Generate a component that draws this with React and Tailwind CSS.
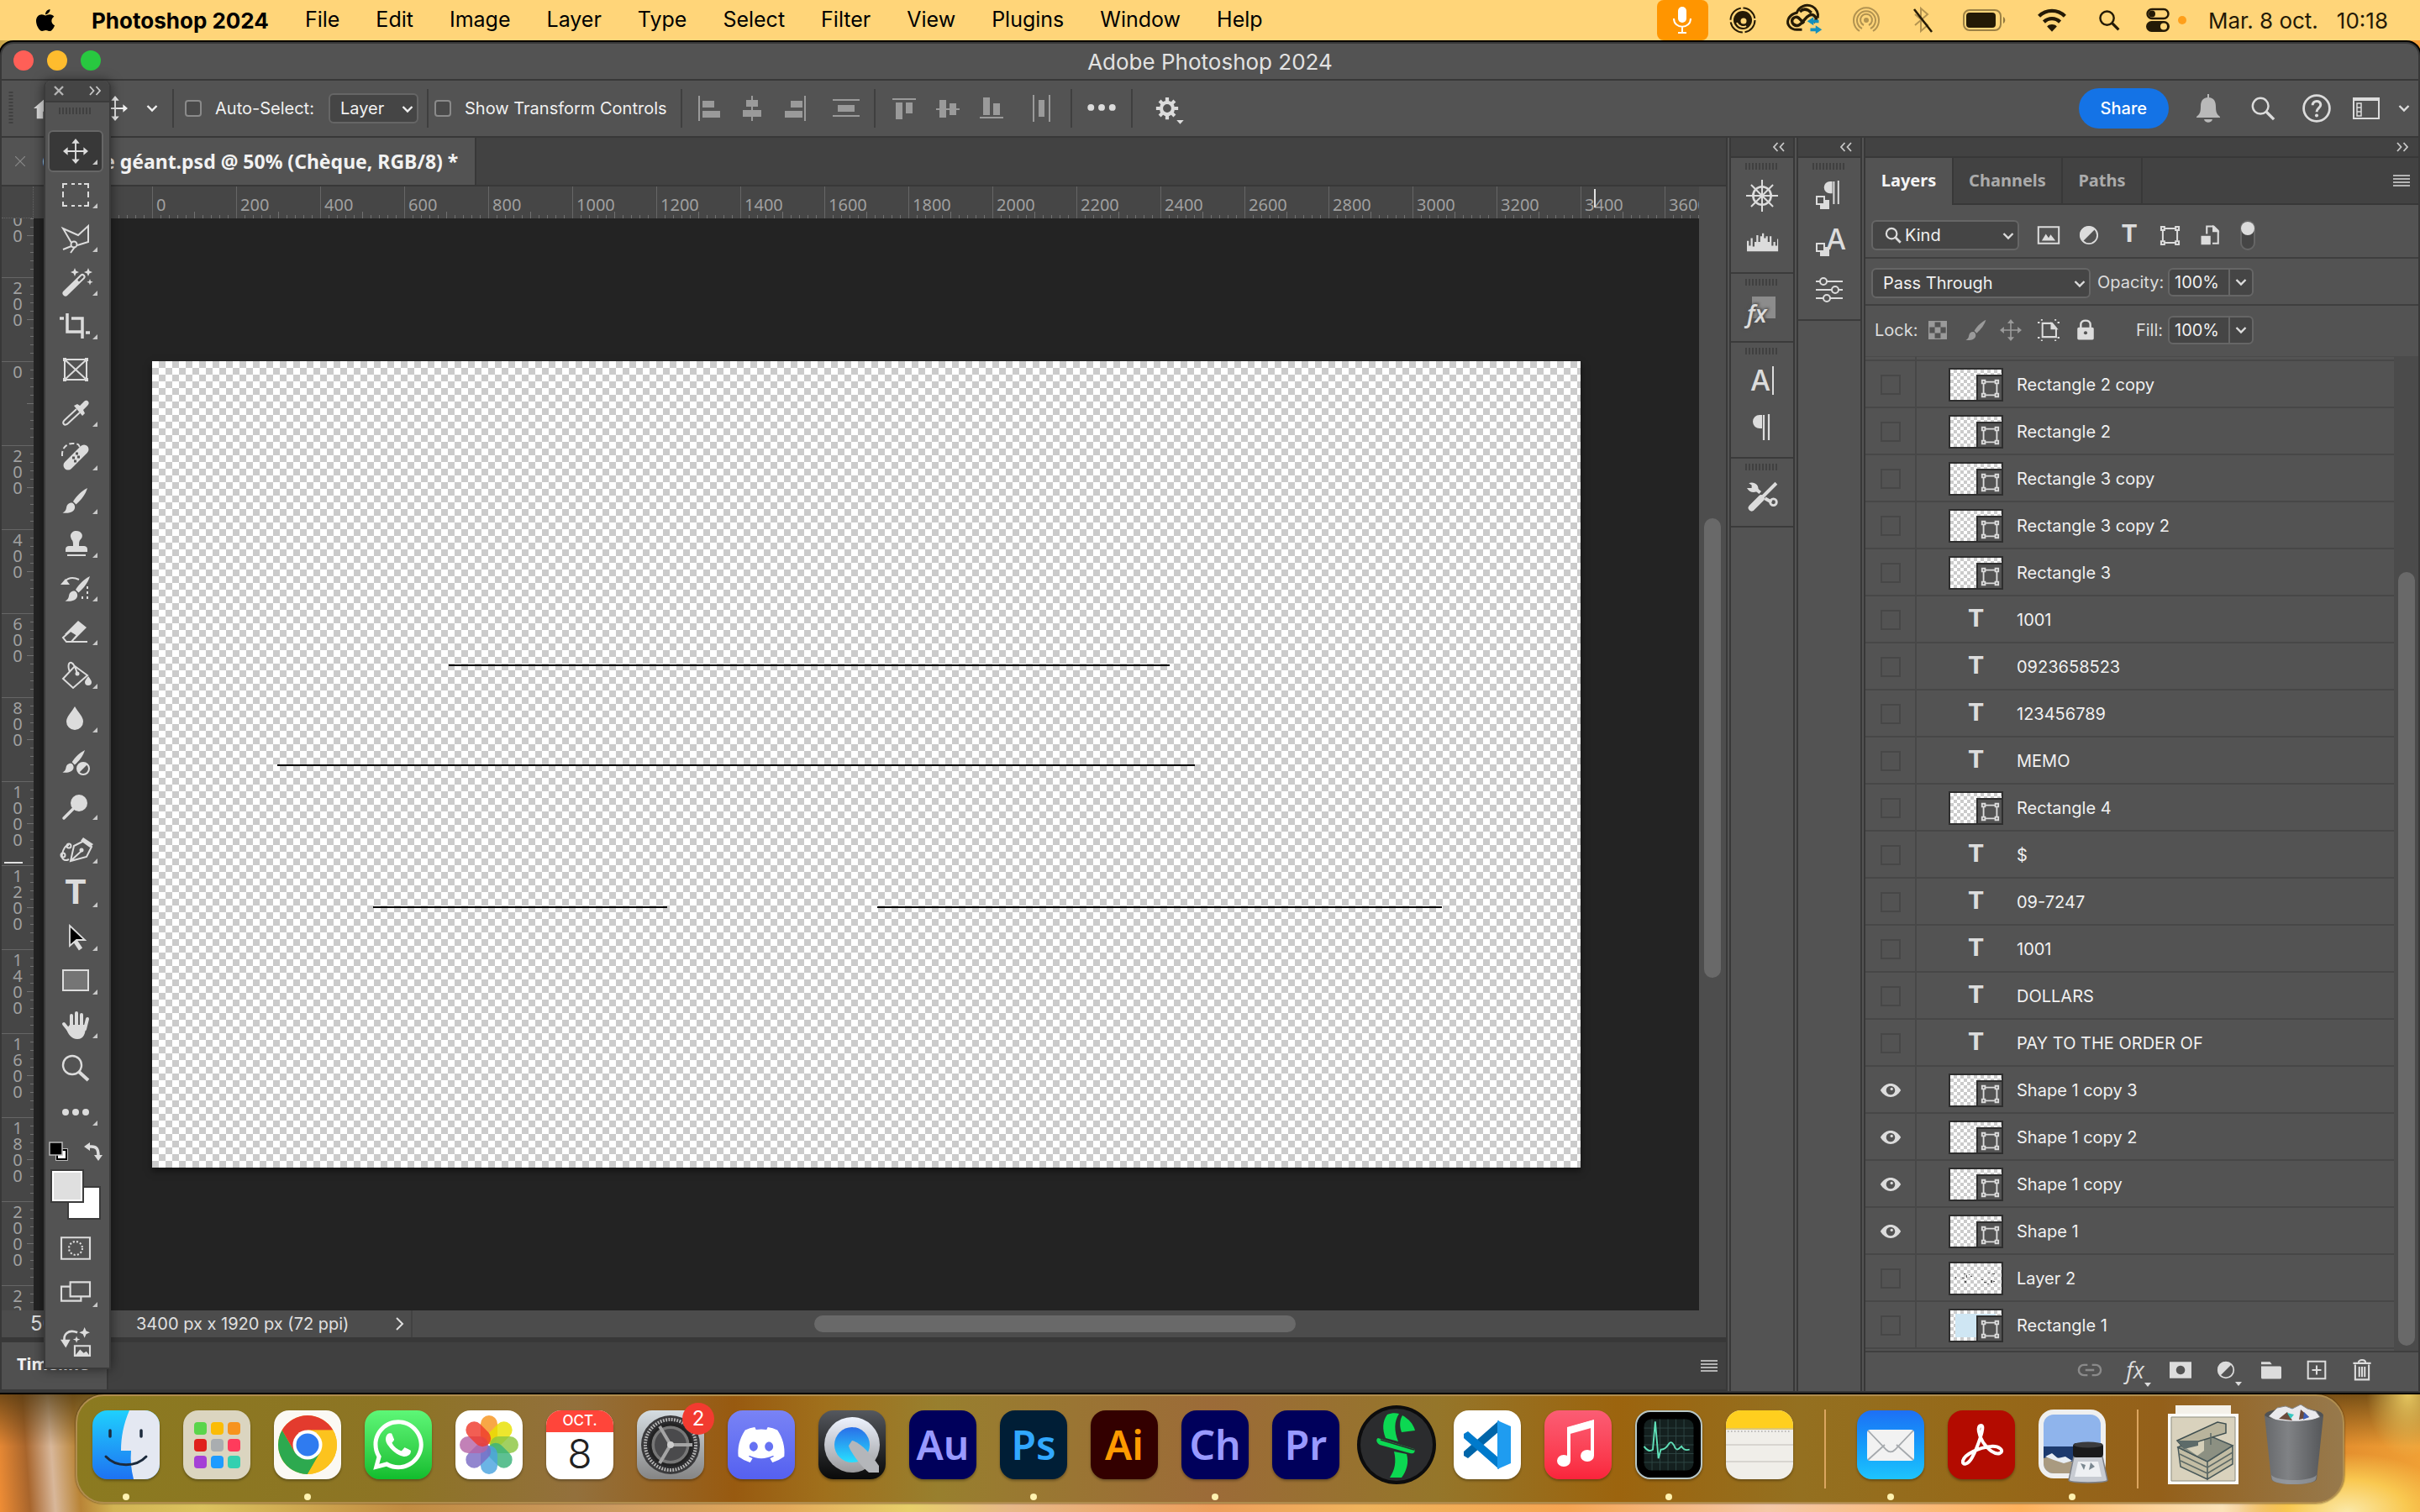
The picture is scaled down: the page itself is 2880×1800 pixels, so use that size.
import { useState } from "react";
import { FaApple, FaDiscord, FaWhatsapp } from "react-icons/fa";

const menus = ["File", "Edit", "Image", "Layer", "Type", "Select", "Filter", "View", "Plugins", "Window", "Help"];

const initialLayers = [
  { name: "Rectangle 2 copy", kind: "shape", visible: false },
  { name: "Rectangle 2", kind: "shape", visible: false },
  { name: "Rectangle 3 copy", kind: "shape", visible: false },
  { name: "Rectangle 3 copy 2", kind: "shape", visible: false },
  { name: "Rectangle 3", kind: "shape", visible: false },
  { name: "1001", kind: "text", visible: false },
  { name: "0923658523", kind: "text", visible: false },
  { name: "123456789", kind: "text", visible: false },
  { name: "MEMO", kind: "text", visible: false },
  { name: "Rectangle 4", kind: "shape", visible: false },
  { name: "$", kind: "text", visible: false },
  { name: "09-7247", kind: "text", visible: false },
  { name: "1001", kind: "text", visible: false },
  { name: "DOLLARS", kind: "text", visible: false },
  { name: "PAY TO THE ORDER OF", kind: "text", visible: false },
  { name: "Shape 1 copy 3", kind: "shape", visible: true },
  { name: "Shape 1 copy 2", kind: "shape", visible: true },
  { name: "Shape 1 copy", kind: "shape", visible: true },
  { name: "Shape 1", kind: "shape", visible: true },
  { name: "Layer 2", kind: "pixel", visible: false },
  { name: "Rectangle 1", kind: "fill", visible: false },
];

const Svg = ({ size = 32, className = "", children }) => (
  <svg
    width={size}
    height={size}
    viewBox="0 0 32 32"
    fill="none"
    stroke="currentColor"
    strokeWidth="2"
    className={`shrink-0 overflow-visible ${className}`}
    aria-hidden="true"
  >
    {children}
  </svg>
);

const Chevron = ({ className = "" }) => (
  <svg width="14" height="10" viewBox="0 0 14 10" fill="none" stroke="currentColor" strokeWidth="2.4" className={`shrink-0 ${className}`} aria-hidden="true">
    <path d="M1.5 2l5.5 5.5L12.500 2" />
  </svg>
);

const DoubleChevron = ({ left }) => (
  <svg width="14" height="12" viewBox="0 0 14 12" fill="none" stroke="#c8c8c8" strokeWidth="1.8" className={left ? "rotate-180" : ""} aria-hidden="true">
    <path d="M1 1l4.500 5L1 11M8.500 1l4.500 5-4.500 5" />
  </svg>
);

const Grip = () => (
  <svg width="40" height="8" viewBox="0 0 40 8" stroke="#404040" strokeWidth="2" aria-hidden="true">
    <path d="M1 0v8M5 0v8M9 0v8M13 0v8M17 0v8M21 0v8M25 0v8M29 0v8M33 0v8M37 0v8" />
  </svg>
);

const Hamburger = () => (
  <svg width="20" height="15" viewBox="0 0 20 15" stroke="#b4b4b4" strokeWidth="2" aria-hidden="true">
    <path d="M0 1h20M0 5h20M0 9h20M0 13h20" />
  </svg>
);

const MoveIcon = ({ size = 30 }) => (
  <Svg size={size}>
    <path d="M16 4v24M4 16h24" />
    <path d="M16 0l5 6H11zM16 32l5-6H11zM0 16l6-5v10zM32 16l-6-5v10z" fill="currentColor" stroke="none" />
  </Svg>
);

const SearchIcon = ({ size = 28, w = 3 }) => (
  <Svg size={size}>
    <circle cx="13" cy="13" r="10" strokeWidth={w} />
    <path d="M20.500 20.500L30 30" strokeWidth={w + 1} />
  </Svg>
);

const TypeIcon = ({ className = "text-[44px]" }) => (
  <span className={`font-['Liberation_Mono',monospace] leading-none font-bold ${className}`}>T</span>
);

const ShapeIcon = ({ size = 24 }) => (
  <Svg size={size}>
    <path d="M8 5h16M8 27h16M5 8v16M27 8v16" strokeWidth="2.600" />
    <path d="M2.500 2.500h5v5h-5zM24.500 2.500h5v5h-5zM2.500 24.500h5v5h-5zM24.500 24.500h5v5h-5z" strokeWidth="2.600" />
  </Svg>
);

const AdjustIcon = ({ size = 24 }) => (
  <Svg size={size}>
    <circle cx="16" cy="16" r="13.500" strokeWidth="2.500" />
    <path d="M25.500 6.500A13.500 13.500 0 1 0 6.500 25.500z" fill="currentColor" stroke="none" />
  </Svg>
);

const BrushShape = () => (
  <g fill="currentColor" stroke="none">
    <path d="M30 1c-6 3-13 9-17 16l3.500 3.500C23 15 28 8 30 1z" />
    <path d="M11.500 18.500c-4 0-6 2.500-6.500 6-.4 3-2 5-4.500 6 6 1 13 0 14.500-5.500.6-2.500-.8-6-3.500-6.500z" />
  </g>
);

const tools = [
  { name: "Move", icon: <MoveIcon />, sub: true },
  {
    name: "Rectangular marquee",
    icon: (
      <Svg>
        <path d="M1 8V3h5M11 3h4M19 3h4M26 3h5v5M31 12v7M31 24v5h-5M23 29h-4M15 29h-4M6 29H1v-5M1 19v-7" />
      </Svg>
    ),
    sub: true,
  },
  {
    name: "Polygonal lasso",
    icon: (
      <Svg>
        <path d="M11 21L1 4l18 8L31 1v19l-13 4" />
        <circle cx="14" cy="23" r="3.500" />
        <path d="M11 25L1 29M15 26l-5 7" />
      </Svg>
    ),
    sub: true,
  },
  {
    name: "Magic wand",
    icon: (
      <Svg>
        <path d="M4 29L24 9.500" strokeWidth="7" strokeLinecap="round" />
        <path d="M20 13.500l4-4" stroke="#535353" strokeWidth="3" strokeLinecap="round" />
        <path d="M15-1l1.400 3.600L20 4l-3.600 1.400L15 9l-1.400-3.600L10 4l3.600-1.400zM31-1l1.400 3.600L36 4l-3.600 1.400L31 9l-1.400-3.600L26 4l3.600-1.400zM33 12l1 2.700 2.700 1-2.700 1-1 2.700-1-2.700-2.700-1 2.700-1z" fill="currentColor" stroke="none" />
      </Svg>
    ),
    sub: true,
  },
  {
    name: "Crop",
    icon: (
      <Svg>
        <path d="M6 1v22h17M-3 7h5M11 7h13v24M28 24h5" strokeWidth="3.500" />
      </Svg>
    ),
    sub: true,
  },
  {
    name: "Frame",
    icon: (
      <Svg>
        <path d="M3 4h26v24H3zM3 4l26 24M29 4L3 28" />
        <path d="M1 2h4v4H1zM27 2h4v4h-4zM1 26h4v4H1zM27 26h4v4h-4z" fill="currentColor" stroke="none" />
      </Svg>
    ),
  },
  {
    name: "Eyedropper",
    icon: (
      <Svg>
        <path d="M17 11L3 24c-2 2-2 4-1 5s3 1 5-1l14-13" />
        <path d="M14 7l4-2 3 2 5-5c2-2 4-1 5 0s1 3-1 5l-5 5 2 4-3 3z" fill="currentColor" stroke="none" />
      </Svg>
    ),
    sub: true,
  },
  {
    name: "Spot healing brush",
    icon: (
      <Svg>
        <path d="M0 15C-1 5 6-1 14 0s5 2 7 4" strokeDasharray="6 3" />
        <path d="M7 26L26 7" strokeWidth="11" strokeLinecap="round" />
        <path d="M12 17h3M17 21h-3M16 12h3M21 16h-3" stroke="#535353" strokeWidth="3" />
      </Svg>
    ),
    sub: true,
  },
  { name: "Brush", icon: <Svg><BrushShape /></Svg>, sub: true },
  {
    name: "Clone stamp",
    icon: (
      <Svg>
        <path d="M10 7a7 6 0 1 1 12 3c-2 2-2 4-2 8h6c2 0 4 1 4 4v3H4v-3c0-3 2-4 4-4h5c0-4 0-6-2-8z" fill="currentColor" stroke="none" />
        <path d="M6 29h22" />
      </Svg>
    ),
    sub: true,
  },
  {
    name: "History brush",
    icon: (
      <Svg>
        <g transform="translate(3 1)"><BrushShape /></g>
        <path d="M3 8c5-5 11-5 17-2" />
        <path d="M-2 12l6-7 5 7z" fill="currentColor" stroke="none" />
        <path d="M30 14v16M24 26v6" strokeDasharray="3 3" />
      </Svg>
    ),
    sub: true,
  },
  {
    name: "Eraser",
    icon: (
      <Svg>
        <path d="M19 3l10 8-14 14-12-6z" fill="currentColor" stroke="none" />
        <path d="M1 23l9-8 8 5-7 8H5zM11 28h19" fill="#535353" />
      </Svg>
    ),
    sub: true,
  },
  {
    name: "Paint bucket",
    icon: (
      <Svg>
        <path d="M1 20L15 5l15 11-17 15zM9 12C6 4 8 0 11 1s5 6 7 13" />
        <circle cx="18" cy="14" r="2.500" fill="currentColor" stroke="none" />
        <path d="M31 17c2 3 4 5 4 7a4 4 0 0 1-8 0c0-2 2-4 4-7z" fill="currentColor" stroke="none" />
      </Svg>
    ),
    sub: true,
  },
  {
    name: "Blur",
    icon: (
      <Svg>
        <path d="M15 1c4 7 10 12 10 18a10 10 0 0 1-20 0C5 13 11 8 15 1z" fill="currentColor" stroke="none" />
      </Svg>
    ),
    sub: true,
  },
  {
    name: "Mixer brush",
    icon: (
      <Svg>
        <g transform="scale(.9)"><BrushShape /></g>
        <circle cx="25" cy="23" r="8" fill="#535353" stroke="#535353" strokeWidth="4" />
        <circle cx="25" cy="23" r="7" />
        <path d="M30 18A7 7 0 1 0 20 28z" fill="currentColor" stroke="none" />
      </Svg>
    ),
  },
  {
    name: "Dodge",
    icon: (
      <Svg>
        <circle cx="20" cy="12" r="10" fill="currentColor" stroke="none" />
        <path d="M14 18L2 30" strokeWidth="3.500" strokeLinecap="round" />
      </Svg>
    ),
    sub: true,
  },
  {
    name: "Pen",
    icon: (
      <Svg>
        <path d="M10 29l4-18 12-6 9 7-6 12zM11 28l12-11" />
        <circle cx="23" cy="16" r="2.500" fill="currentColor" stroke="none" />
        <path d="M25 1l12 8-4 4-11-8z" fill="currentColor" stroke="none" />
        <path d="M8 27c-6 3-9-1-8-6 1-6 4-11 8-11" />
        <circle cx="8" cy="11" r="2.500" />
        <circle cx="1" cy="22" r="2.500" />
      </Svg>
    ),
    sub: true,
  },
  { name: "Horizontal type", icon: <TypeIcon />, sub: true },
  {
    name: "Path selection",
    icon: (
      <Svg>
        <path d="M14 18l8 12" strokeWidth="5" />
        <path d="M9 2l18 17H17l-8 7z" fill="#000" strokeWidth="1.800" />
      </Svg>
    ),
    sub: true,
  },
  {
    name: "Rectangle",
    icon: (
      <Svg>
        <path d="M1 3h30v24H1z" fill="#757575" />
      </Svg>
    ),
    sub: true,
  },
  {
    name: "Hand",
    icon: (
      <Svg>
        <path d="M2 15l8 10M11 5v14M17 2v16M23 4v14M30 9l-3 12" strokeWidth="4" strokeLinecap="round" />
        <path d="M9 16h19c0 10-2 17-10 17-7 0-11-6-13-12z" fill="currentColor" stroke="none" />
      </Svg>
    ),
    sub: true,
  },
  {
    name: "Zoom",
    icon: (
      <Svg>
        <circle cx="12" cy="12" r="11" strokeWidth="2.400" />
        <path d="M20 20l11 10" strokeWidth="4" />
      </Svg>
    ),
  },
  {
    name: "Edit toolbar",
    icon: (
      <Svg>
        <g fill="currentColor" stroke="none">
          <circle cx="4" cy="16" r="4" />
          <circle cx="16" cy="16" r="4" />
          <circle cx="28" cy="16" r="4" />
        </g>
      </Svg>
    ),
    sub: true,
  },
];

function ToolPalette() {
  const [active, setActive] = useState("Move");
  return (
    <aside className="absolute top-11 left-[50px] z-10 flex w-20 flex-col rounded-t-lg border-x-2 border-b-2 border-[#3b3b3b] bg-[#535353] pr-1 pb-1 text-[#dcdcdc] shadow-[0_0_14px_rgba(0,0,0,0.5)]">
      <div className="-mr-1 flex h-[26px] items-center justify-between rounded-t-lg border-b-2 border-[#3b3b3b] bg-[#454545] px-2.5">
        <svg width="12" height="12" viewBox="0 0 12 12" stroke="#b4b4b4" strokeWidth="2.4" aria-hidden="true">
          <path d="M1 1l10 10M11 1L1 11" />
        </svg>
        <DoubleChevron />
      </div>
      <div className="flex h-8 justify-center pt-1.5">
        <Grip />
      </div>
      {tools.map((tool) => (
        <button
          key={tool.name}
          type="button"
          aria-label={tool.name}
          onClick={() => setActive(tool.name)}
          className="relative flex h-[52px] items-center justify-center"
        >
          <span
            className={`flex h-[50px] w-[66px] items-center justify-center rounded-md border-2 ${
              active === tool.name ? "border-[#666] bg-[#383838]" : "border-transparent"
            }`}
          >
            {tool.icon}
          </span>
          {tool.sub && (
            <svg width="6" height="6" viewBox="0 0 6 6" className="absolute right-2.5 bottom-2.5" aria-hidden="true">
              <path d="M6 0v6H0z" fill="#c8c8c8" />
            </svg>
          )}
        </button>
      ))}
      <div className="flex h-[42px] items-center justify-between px-1">
        <svg width="24" height="24" viewBox="0 0 24 24" aria-hidden="true">
          <path d="M8.500 8.500h14v14h-14z" fill="#fff" stroke="#bbb" />
          <path d="M10 10h11v11H10z" fill="#fff" stroke="#000" strokeWidth="2" />
          <path d="M1 1h15v15H1z" fill="#000" stroke="#bbb" strokeWidth="1.500" />
        </svg>
        <svg width="22" height="22" viewBox="0 0 22 22" aria-hidden="true">
          <path d="M5 5h4c6 0 8 3 8 11" fill="none" stroke="#dcdcdc" strokeWidth="3.500" />
          <path d="M0 5l7-5v10zM12 15h10l-5 7z" fill="#dcdcdc" />
        </svg>
      </div>
      <div className="relative mx-auto h-[60px] w-[60px]">
        <div className="absolute right-0 bottom-0 h-10 w-10 border-2 border-[#3b3b3b] bg-white" />
        <div className="absolute top-0 left-0 h-10 w-10 border-2 border-[#3b3b3b] bg-[#dfdfdf] ring-2 ring-white ring-inset" />
      </div>
      <button type="button" aria-label="Quick mask" className="mt-2 flex h-[52px] items-center justify-center">
        <Svg size={34}>
          <path d="M0 4h32v24H0z" />
          <circle cx="16" cy="16" r="7.500" strokeDasharray="2 2" strokeWidth="2" />
        </Svg>
      </button>
      <button type="button" aria-label="Screen mode" className="relative flex h-[52px] items-center justify-center">
        <Svg size={34}>
          <path d="M0 10h22v16H0z" />
          <path d="M10 5h22v16H10z" fill="#535353" />
        </Svg>
        <svg width="6" height="6" viewBox="0 0 6 6" className="absolute right-2.5 bottom-2" aria-hidden="true">
          <path d="M6 0v6H0z" fill="#c8c8c8" />
        </svg>
      </button>
      <button type="button" aria-label="Generate image" className="mt-2 flex h-[52px] items-center justify-center">
        <Svg size={34}>
          <path d="M18 5C8 1 1 7 4 16" strokeWidth="2.500" />
          <path d="M-1 13l6 9 5-9z" fill="currentColor" stroke="none" />
          <path d="M15 20h17v11H15z" />
          <path d="M16 30l5-6 4 4 3-2 3 4zM26-1l1.800 4.200L32 5l-4.200 1.800L26 11l-1.800-4.200L20 5l4.200-1.800zM17 9l1 2.800 3 1-3 1-1 2.800-1-2.800-3-1 3-1z" fill="currentColor" stroke="none" />
        </Svg>
      </button>
    </aside>
  );
}

function MenuBar() {
  return (
    <header className="flex h-12 shrink-0 items-center bg-[#ffd579] pl-[39px] text-[25px] text-black">
      <FaApple size={30} className="shrink-0" />
      <nav className="ml-10 flex items-center gap-[43px] whitespace-nowrap">
        <button type="button" className="text-[26px] font-bold">Photoshop 2024</button>
        {menus.map((m) => (
          <button key={m} type="button">{m}</button>
        ))}
      </nav>
      <div className="ml-auto flex items-center pr-[38px] text-[#241a06]">
        <span className="flex h-12 w-[61px] items-center justify-center rounded-lg bg-[#ff9500] text-white">
          <Svg size={32}>
            <rect x="11" y="0" width="10" height="19" rx="5" fill="currentColor" stroke="none" />
            <path d="M6 14c0 13 20 13 20 0M16 24v6M11 31h10" />
          </Svg>
        </span>
        <span className="ml-[25px] flex w-8 justify-center">
          <Svg>
            <circle cx="16" cy="16" r="14.500" strokeDasharray="20 2.800" />
            <circle cx="16" cy="16" r="11" fill="currentColor" stroke="none" />
            <circle cx="17" cy="17" r="3.500" fill="#ffd579" stroke="none" />
            <path d="M9 19c2 5 8 6 11 4" stroke="#ffd579" />
          </Svg>
        </span>
        <span className="ml-[35px] flex w-11 justify-center">
          <Svg size={40}>
            <path d="M14 25H9C3 25-1 20 1 15s8-6 8-6c2-6 9-9 15-6 4 2 6 7 5 11" strokeWidth="2.400" />
            <path d="M16 19l-5-5c-4-3-9 2-5 6 4 3 7 0 10-4s7-7 10-4 1 5-1 6M12 8c4-4 8-2 11 1" strokeWidth="2.800" />
            <path d="M19 17l6-4v2.500h5v3h-5V21zM33 25l-6-4v2.500h-5v3h5V29z" fill="#1590bd" stroke="none" />
          </Svg>
        </span>
        <span className="ml-9 flex w-8 justify-center opacity-35">
          <Svg>
            <circle cx="16" cy="16" r="3" fill="currentColor" stroke="none" />
            <path d="M13 22a7 7 0 1 1 6 0M11 26a11 11 0 1 1 10 0M8 29a15 15 0 1 1 16 0" />
          </Svg>
        </span>
        <span className="ml-[34px] flex w-8 justify-center">
          <Svg>
            <path d="M8 9l15 13-8 7V2l8 7L8 22" opacity=".35" />
            <path d="M7 3l21 27" strokeWidth="2.500" />
          </Svg>
        </span>
        <svg width="52" height="26" viewBox="0 0 52 26" className="ml-[33px]" aria-hidden="true">
          <rect x="1" y="1" width="44" height="24" rx="7" fill="none" stroke="#241a06" strokeOpacity=".45" strokeWidth="2" />
          <rect x="4" y="4" width="35" height="18" rx="4" fill="#241a06" />
          <path d="M48 9c3 2 3 6 0 8z" fill="#241a06" fillOpacity=".5" />
        </svg>
        <span className="ml-9 flex w-9 justify-center">
          <Svg size={34}>
            <path d="M1.500 11.500c8-8 21-8 29 0M7 18c5-5 13-5 18 0" strokeWidth="4" />
            <path d="M16 29l-5.500-6c3-3 8-3 11 0z" fill="currentColor" stroke="none" />
          </Svg>
        </span>
        <span className="ml-[34px] flex w-8 justify-center"><SearchIcon size={26} /></span>
        <svg width="28" height="30" viewBox="0 0 28 30" className="ml-7" aria-hidden="true">
          <rect x="1.500" y="2" width="25" height="11" rx="5.500" fill="none" stroke="#241a06" strokeWidth="2.400" />
          <circle cx="7" cy="7.500" r="4" fill="#241a06" />
          <rect x="0" y="16" width="28" height="13" rx="6.500" fill="#241a06" />
          <circle cx="21" cy="22.500" r="4" fill="#ffd579" />
        </svg>
        <span className="ml-2.5 h-2.5 w-2.5 rounded-full bg-[#ff9f1a]" />
        <span className="ml-[26px] flex gap-[22px] text-[26px] whitespace-nowrap">
          <span>Mar. 8 oct.</span>
          <span>10:18</span>
        </span>
      </div>
    </header>
  );
}

const Divider = ({ className = "" }) => <div className={`h-[46px] w-0.5 shrink-0 bg-[#3f3f3f] ${className}`} />;

const Check = ({ id, label, className = "" }) => (
  <div className={`flex shrink-0 items-center gap-4 ${className}`}>
    <input id={id} type="checkbox" className="h-5 w-5 appearance-none rounded border-2 border-[#8a8a8a] bg-[#4a4a4a] checked:bg-[#1473e6]" />
    <label htmlFor={id} className="whitespace-nowrap">{label}</label>
  </div>
);

const Select = ({ label, value, className = "", pad = "pl-3", children }) => (
  <div className={`relative h-9 shrink-0 ${className}`}>
    {children}
    <select aria-label={label} className={`h-full w-full appearance-none rounded-md border-2 border-[#666] bg-[#454545] text-[#f0f0f0] ${pad}`}>
      <option>{value}</option>
    </select>
    <Chevron className="pointer-events-none absolute top-3.5 right-1.5" />
  </div>
);

const AlignSlot = ({ label, className = "w-[51px]", children }) => (
  <button type="button" aria-label={label} className={`flex shrink-0 justify-center text-[#9a9a9a] ${className}`}>
    <Svg size={32}>{children}</Svg>
  </button>
);

function OptionsBar() {
  return (
    <div className="flex h-[68px] shrink-0 items-center border-b-2 border-[#383838] pl-2 text-[20px] text-[#f0f0f0]">
      <svg width="6" height="40" viewBox="0 0 6 40" stroke="#404040" strokeWidth="5" className="shrink-0" aria-hidden="true">
        <path d="M3 0v40" strokeDasharray="2 2" />
      </svg>
      <button type="button" aria-label="Home" className="ml-6 w-8 shrink-0 text-[#dcdcdc]">
        <Svg size={30}>
          <path d="M16 2L0 16h4v13h8v-9h8v9h8V16h4z" fill="currentColor" stroke="none" />
        </Svg>
      </button>
      <span className="ml-[50px] shrink-0"><MoveIcon size={30} /></span>
      <Chevron className="ml-[22px]" />
      <Divider className="ml-[17px]" />
      <Check id="auto-select" label="Auto-Select:" className="ml-[13px] w-[171px]" />
      <Select label="Auto-select target" value="Layer" className="w-[107px]" />
      <Divider className="ml-2.5" />
      <Check id="transform-controls" label="Show Transform Controls" className="ml-[7px] w-[293px]" />
      <Divider />
      <AlignSlot label="Align left edges" className="ml-1.5 w-[51px]">
        <path d="M4 1v30" />
        <path d="M8 7h14v8H8zM8 19h21v8H8z" fill="currentColor" stroke="none" />
      </AlignSlot>
      <AlignSlot label="Align horizontal centers">
        <path d="M16 1v30" />
        <path d="M9 6h14v8H9zM5 18h22v8H5z" fill="currentColor" stroke="none" />
      </AlignSlot>
      <AlignSlot label="Align right edges">
        <path d="M28 1v30" />
        <path d="M11 7h14v8H11zM4 19h21v8H4z" fill="currentColor" stroke="none" />
      </AlignSlot>
      <AlignSlot label="Distribute vertically" className="ml-2.5 w-[51px]">
        <path d="M0 6h32M0 25h32" />
        <path d="M6 12h20v8H6z" fill="currentColor" stroke="none" />
      </AlignSlot>
      <Divider className="ml-2" />
      <AlignSlot label="Align top edges" className="ml-2 w-[52px]">
        <path d="M2 5h28" />
        <path d="M6 9h8v20H6zM18 9h8v13h-8z" fill="currentColor" stroke="none" />
      </AlignSlot>
      <AlignSlot label="Align vertical centers" className="w-[52px]">
        <path d="M2 17h28" />
        <path d="M6 6h8v21H6zM18 10h8v14h-8z" fill="currentColor" stroke="none" />
      </AlignSlot>
      <AlignSlot label="Align bottom edges" className="w-[52px]">
        <path d="M2 27h28" />
        <path d="M6 3h8v21H6zM18 10h8v14h-8z" fill="currentColor" stroke="none" />
      </AlignSlot>
      <AlignSlot label="Distribute horizontally" className="ml-2 w-[52px]">
        <path d="M6 0v32M25 0v32" />
        <path d="M12 6h7v20h-7z" fill="currentColor" stroke="none" />
      </AlignSlot>
      <Divider className="ml-2" />
      <button type="button" aria-label="More options" className="flex w-[70px] shrink-0 justify-center text-[#dcdcdc]">
        <Svg size={34}>
          <g fill="currentColor" stroke="none">
            <circle cx="4" cy="15" r="3.700" />
            <circle cx="16" cy="15" r="3.700" />
            <circle cx="28" cy="15" r="3.700" />
          </g>
        </Svg>
      </button>
      <Divider />
      <button type="button" aria-label="Tool settings" className="ml-[26px] shrink-0 text-[#dcdcdc]">
        <Svg size={30}>
          <circle cx="16" cy="16" r="7.500" strokeWidth="4.500" />
          <path d="M16 2v5M16 25v5M2 16h5M25 16h5M6.500 6.500l3.500 3.500M22 22l3.500 3.500M25.500 6.500L22 10M10 22l-3.500 3.500" strokeWidth="4.500" />
          <path d="M28 31h9l-4.500 5z" fill="currentColor" stroke="none" />
        </Svg>
      </button>
      <div className="ml-auto flex items-center pr-2.5 text-[#dcdcdc]">
        <button type="button" className="h-12 rounded-full bg-[#1473e6] px-[26px] text-[20px] font-medium text-white">Share</button>
        <button type="button" aria-label="Notifications" className="ml-[31px] text-[#b9b9b9]">
          <Svg>
            <path d="M16-1v5" />
            <path d="M16 3c7 0 9 5 9 11 0 6 1 9 5 12v1H2v-1c4-3 5-6 5-12 0-6 2-11 9-11zM11 29h10c-1 5-9 5-10 0z" fill="currentColor" stroke="none" />
          </Svg>
        </button>
        <button type="button" aria-label="Search" className="ml-[34px]"><SearchIcon size={30} w={2.6} /></button>
        <button type="button" aria-label="Help" className="ml-8">
          <Svg size={34}>
            <circle cx="16" cy="16" r="14.500" strokeWidth="2.600" />
            <path d="M11.500 12.500c0-6 9-6 9-.5 0 3.500-4.500 4-4.500 8" strokeWidth="2.800" />
            <circle cx="16" cy="24" r="1.900" fill="currentColor" stroke="none" />
          </Svg>
        </button>
        <button type="button" aria-label="Workspace" className="ml-[26px] flex items-center gap-[22px]">
          <Svg>
            <path d="M1 5h30v23H1z" />
            <path d="M0 3h32v4H0z" fill="currentColor" stroke="none" />
            <path d="M5 10h5v15H5zM5 15h5M5 20h5" strokeWidth="1.500" />
          </Svg>
          <Chevron />
        </button>
      </div>
    </div>
  );
}

const hMarks = [-200, 0, 200, 400, 600, 800, 1000, 1200, 1400, 1600, 1800, 2000, 2200, 2400, 2600, 2800, 3000, 3200, 3400, 3600];
const vMarks = [400, 200, 0, 200, 400, 600, 800, 1000, 1200, 1400, 1600, 1800, 2000, 2200];

const HorizontalRuler = () => (
  <div className="relative flex h-[38px] shrink-0 overflow-hidden bg-[#464646] font-['Noto_Sans',sans-serif] text-[20px] text-[#a0a0a0]">
    <div className="w-[38px] shrink-0 border-r border-b border-dotted border-[#666]" />
    <div className="w-[41px] shrink-0" />
    {hMarks.map((m) => (
      <div key={m} className="relative w-[100px] shrink-0 border-l border-[#666] pt-2.5 pl-1 leading-6">
        {m}
        <svg width="100" height="8" viewBox="0 0 100 8" stroke="#707070" className="absolute bottom-0 left-0" aria-hidden="true">
          <path d="M9.500 4v4M19.500 4v4M29.500 4v4M39.500 4v4M49.500 0v8M59.500 4v4M69.500 4v4M79.500 4v4M89.500 4v4" />
        </svg>
      </div>
    ))}
    <div className="absolute top-[3px] left-[1895px] h-[22px] w-0.5 bg-[#e0e0e0]" />
  </div>
);

const VerticalRuler = () => (
  <div className="relative w-[38px] shrink-0 overflow-hidden bg-[#464646] font-['Noto_Sans',sans-serif] text-[20px] text-[#a0a0a0]">
    <div className="-mt-[30px]">
      {vMarks.map((m, i) => (
        <div key={i} className="relative flex h-[100px] flex-col items-center border-t border-[#666] pt-0.5">
          {String(m).split("").map((d, j) => (
            <span key={j} className="h-[19px] leading-[19px]">{d}</span>
          ))}
          <svg width="8" height="100" viewBox="0 0 8 100" stroke="#707070" className="absolute top-0 right-0" aria-hidden="true">
            <path d="M4 9.500h4M4 19.500h4M4 29.500h4M4 39.500h4M0 49.500h8M4 59.500h4M4 69.500h4M4 79.500h4M4 89.500h4" />
          </svg>
        </div>
      ))}
    </div>
    <div className="absolute top-[766px] left-[3px] h-0.5 w-[22px] bg-[#e0e0e0]" />
  </div>
);

function Document() {
  return (
    <section className="flex min-w-0 flex-1 flex-col border-r-2 border-[#383838]">
      <div className="flex h-[58px] shrink-0 border-b-2 border-[#383838] bg-[#424242]">
        <div className="flex items-center border-r-2 border-[#383838] bg-[#535353] pr-5 pl-4 font-['Noto_Sans',sans-serif] text-[23px] font-bold whitespace-nowrap text-[#f2f2f2]">
          <svg width="12" height="12" viewBox="0 0 12 12" stroke="#8a8a8a" strokeWidth="1.2" className="mr-5" aria-hidden="true">
            <path d="M0 0l12 12M12 0L0 12" />
          </svg>
          Chèque géant.psd @ 50% (Chèque, RGB/8) *
        </div>
      </div>
      <div className="flex min-h-0 flex-1">
        <div className="flex min-w-0 flex-1 flex-col">
          <HorizontalRuler />
          <div className="flex min-h-0 flex-1">
            <VerticalRuler />
            <div className="min-w-0 flex-1 overflow-hidden bg-[#232323] pt-[170px] pl-[141px]">
              <div className="relative h-[960px] w-[1700px] bg-[repeating-conic-gradient(#cbcbcb_0_25%,#ffffff_0_50%)] bg-[length:16px_16px] shadow-[0_4px_8px_rgba(0,0,0,0.5)]">
                <div className="absolute top-[361px] left-[353px] h-0.5 w-[858px] bg-black" />
                <div className="absolute top-[480px] left-[149px] h-0.5 w-[1092px] bg-black" />
                <div className="absolute top-[649px] left-[263px] h-0.5 w-[350px] bg-black" />
                <div className="absolute top-[649px] left-[863px] h-0.5 w-[672px] bg-black" />
              </div>
            </div>
          </div>
        </div>
        <div className="w-8 shrink-0 bg-[#4d4d4d] px-1.5 pt-[395px]">
          <div className="h-[547px] rounded-full bg-[#696969]" />
        </div>
      </div>
      <div className="flex h-8 shrink-0 items-center bg-[#4c4c4c] text-[20px] text-[#e0e0e0]">
        <span className="w-40 shrink-0 pl-[34px] text-[24px]">50%</span>
        <span className="w-[309px] shrink-0 whitespace-nowrap">3400 px x 1920 px (72 ppi)</span>
        <svg width="10" height="16" viewBox="0 0 10 16" fill="none" stroke="currentColor" strokeWidth="2" aria-hidden="true">
          <path d="M1 1l7 7-7 7" />
        </svg>
        <div className="ml-2 h-8 w-0.5 shrink-0 bg-[#424242]" />
        <div className="ml-[478px] h-5 w-[573px] rounded-full bg-[#696969]" />
      </div>
      <div className="flex h-16 shrink-0 items-center justify-between border-t-[6px] border-b-2 border-[#383838] bg-[#404040] pr-2.5">
        <h2 className="flex h-full w-[127px] items-center border-r-2 border-[#383838] bg-[#505050] pb-1 pl-[18px] font-['Noto_Sans',sans-serif] text-[20px] font-bold text-[#f2f2f2]">Timeline</h2>
        <Hamburger />
      </div>
    </section>
  );
}

const IconGroup = ({ items }) => (
  <div className="flex flex-col items-center border-b-2 border-[#3b3b3b] pt-1.5 pb-[7px]">
    <Grip />
    <div className="mt-[3px] flex w-full flex-col">
      {items.map((it) => (
        <button key={it.name} type="button" aria-label={it.name} className="flex h-14 items-center justify-center">
          {it.icon}
        </button>
      ))}
    </div>
  </div>
);

const Overlap = () => (
  <>
    <path d="M5 21h11v11H5z" fill="currentColor" stroke="none" />
    <path d="M1 17h9v9H1z" fill="#535353" />
  </>
);

const Pilcrow = ({ x = 0, y = 0, s = 1 }) => (
  <g transform={`translate(${x} ${y}) scale(${s})`}>
    <path d="M22 1H11a8 8 0 0 0 0 16h3V1z" fill="currentColor" stroke="none" />
    <path d="M16 1v30M22 0v31" strokeWidth="2.200" />
  </g>
);

const dockOne = [
  [
    {
      name: "Navigator",
      icon: (
        <Svg size={38}>
          <circle cx="16" cy="16" r="9" strokeWidth="2.200" />
          <path d="M16 0v32M0 16h32M5 5l22 22M27 5L5 27" strokeWidth="1.700" />
        </Svg>
      ),
    },
    {
      name: "Histogram",
      icon: (
        <Svg size={36}>
          <path d="M0 25V14h2v5h2v-8h2v9h2v-5h2V8h2v7h2v-6h2V6h2v5h2V9h2v6h2V9h2v10h2v-4h2v4h2v-7h1v13z" fill="currentColor" stroke="none" />
        </Svg>
      ),
    },
  ],
  [
    {
      name: "Styles",
      icon: (
        <span className="relative flex h-9 w-9 items-end">
          <span className="absolute top-0 right-0.5 h-[26px] w-7 bg-[#8c8c8c]" />
          <span className="relative font-['Open_Sans',sans-serif] text-[28px] leading-8 font-semibold italic [text-shadow:0_0_3px_#535353,0_0_4px_#535353,2px_-1px_3px_#535353]">fx</span>
        </span>
      ),
    },
  ],
  [
    {
      name: "Character",
      icon: (
        <span className="flex items-center border-r-2 border-[#dcdcdc] pr-0.5 text-[34px] leading-[34px] font-medium">A</span>
      ),
    },
    { name: "Paragraph", icon: <Svg><Pilcrow x={2} /></Svg> },
  ],
  [
    {
      name: "Tool presets",
      icon: (
        <Svg size={36}>
          <path d="M31 2L17 16" strokeWidth="3.500" />
          <path d="M15 18L5 28" strokeWidth="7" strokeLinecap="round" />
          <path d="M8 7l6 5M19 18l7 4" strokeWidth="3.500" />
          <path d="M2 2c5-2 11 1 10 8-5 3-10 1-12-3h5V4z" fill="currentColor" stroke="none" />
          <circle cx="28" cy="22" r="3.400" strokeWidth="2.500" />
        </Svg>
      ),
    },
  ],
];

const dockTwo = [
  [
    {
      name: "Paragraph styles",
      icon: <Svg><Pilcrow x={7} y={-2} s={0.9} /><Overlap /></Svg>,
    },
    {
      name: "Character styles",
      icon: (
        <span className="relative">
          <Svg><Overlap /></Svg>
          <span className="absolute -top-2 -right-1 text-[34px] leading-10 font-medium">A</span>
        </span>
      ),
    },
    {
      name: "Properties",
      icon: (
        <Svg>
          <path d="M0 6h5M13 6h19M0 16h19M27 16h5M0 26h9M17 26h15" />
          <circle cx="9" cy="6" r="4" />
          <circle cx="23" cy="16" r="4" />
          <circle cx="13" cy="26" r="4" />
        </Svg>
      ),
    },
  ],
];

const IconColumn = ({ groups }) => (
  <div className="flex w-[78px] shrink-0 flex-col border-x-2 border-[#383838] bg-[#535353] text-[#dcdcdc]">
    <div className="flex h-6 items-center justify-end border-b-2 border-[#383838] bg-[#424242] pr-2.5">
      <DoubleChevron left />
    </div>
    {groups.map((g, i) => (
      <IconGroup key={i} items={g} />
    ))}
  </div>
);

const PercentField = ({ id, label }) => (
  <div className="flex items-center gap-1.5">
    <label htmlFor={id} className="w-[78px] text-right">{label}</label>
    <div className="flex h-[34px] w-[102px] rounded-md border-2 border-[#666] bg-[#454545]">
      <input id={id} type="text" defaultValue="100%" className="w-[72px] border-r-2 border-[#666] bg-transparent pl-1.5 text-[#f0f0f0]" />
      <button type="button" aria-label={`${label} slider`} className="flex flex-1 items-center justify-center">
        <Chevron />
      </button>
    </div>
  </div>
);

const Thumb = ({ kind }) => {
  if (kind === "text") {
    return (
      <span className="flex w-[65px] justify-center">
        <TypeIcon className="text-[32px]" />
      </span>
    );
  }
  return (
    <span className="relative block h-10 w-[65px] border-2 border-[#2e2e2e] bg-[repeating-conic-gradient(#cbcbcb_0_25%,#ffffff_0_50%)] bg-[length:8px_8px]">
      {kind === "fill" && <span className="absolute top-1 left-1.5 h-7 w-12 bg-[#cfe6f3]" />}
      {kind === "pixel" && (
        <svg width="61" height="36" viewBox="0 0 61 36" fill="#555" className="absolute inset-0" aria-hidden="true">
          <path d="M16 12h2v1h-2zM19 14h1v3h-1zM14 17h3v1h-3zM22 13h1v1h-1zM24 15h2v1h-2zM17 21h2v2h-2zM6 16h1v2H6zM45 11h2v1h-2zM50 12h3v1h-3zM37 19h2v1h-2zM40 22h3v1h-3zM48 20h2v3h-2zM44 24h2v1h-2zM51 21h2v1h-2z" />
        </svg>
      )}
      {kind !== "pixel" && (
        <span className="absolute -right-0.5 -bottom-0.5 flex h-8 w-8 items-center justify-center border-2 border-[#2e2e2e] bg-[#535353]">
          <ShapeIcon size={23} />
        </span>
      )}
    </span>
  );
};

function LayerRow({ layer, onToggle }) {
  return (
    <li className="flex h-14 items-center border-b-2 border-[#474747]">
      <label className="relative flex h-full w-[61px] shrink-0 items-center justify-center border-r-2 border-[#474747] pt-0.5">
        <input
          type="checkbox"
          aria-label={`Show ${layer.name}`}
          checked={layer.visible}
          onChange={onToggle}
          className="h-6 w-6 appearance-none border-2 border-[#474747] checked:border-transparent"
        />
        {layer.visible && (
          <Svg size={26} className="absolute">
            <path d="M1 16C9 3 23 3 31 16 23 29 9 29 1 16z" fill="currentColor" stroke="none" />
            <circle cx="16" cy="16" r="6.500" fill="#535353" stroke="none" />
            <circle cx="17.500" cy="14" r="2" fill="currentColor" stroke="none" />
          </Svg>
        )}
      </label>
      <div className="flex items-center gap-4 pt-0.5 pl-[38px]">
        <Thumb kind={layer.kind} />
        <span className="whitespace-nowrap text-[#f0f0f0]">{layer.name}</span>
      </div>
    </li>
  );
}

const FilterButton = ({ label, children }) => (
  <button type="button" aria-label={label} className="flex w-12 items-center justify-center">
    {children}
  </button>
);

function LayersPanel() {
  const [layers, setLayers] = useState(initialLayers);
  const toggle = (index) => setLayers(layers.map((l, i) => (i === index ? { ...l, visible: !l.visible } : l)));

  return (
    <section className="flex w-[660px] shrink-0 flex-col border-l-2 border-[#383838] bg-[#535353] text-[20px] text-[#dcdcdc]">
      <div className="flex h-6 shrink-0 items-center justify-end border-b-2 border-[#383838] bg-[#424242] pr-3">
        <DoubleChevron />
      </div>
      <div role="tablist" className="flex h-14 shrink-0 bg-[#424242] font-['Noto_Sans',sans-serif] text-[20px] font-bold text-[#ababab]">
        <button type="button" role="tab" aria-selected="true" className="w-[105px] border-r-2 border-[#383838] bg-[#535353] pb-0.5 text-[#f5f5f5]">Layers</button>
        <button type="button" role="tab" aria-selected="false" className="w-[130px] border-r-2 border-b-2 border-[#383838]">Channels</button>
        <button type="button" role="tab" aria-selected="false" className="w-[95px] border-r-2 border-b-2 border-[#383838]">Paths</button>
        <div className="flex flex-1 items-center justify-end border-b-2 border-[#383838] pr-2.5">
          <Hamburger />
        </div>
      </div>

      {/* Filter row */}
      <div className="flex h-16 shrink-0 items-start border-b-2 border-[#3f3f3f] pt-[18px] pl-[7px]">
        <Select label="Filter type" value="Kind" className="w-44" pad="pl-[38px]">
          <span className="pointer-events-none absolute top-2 left-4"><SearchIcon size={20} w={3.5} /></span>
        </Select>
        <div className="ml-[11px] flex h-9">
          <FilterButton label="Filter pixel layers">
            <Svg size={26}>
              <path d="M1 4h30v24H1z" strokeWidth="2.500" />
              <path d="M6 24l6-10 4 6 3-5 7 9z" fill="currentColor" stroke="none" />
            </Svg>
          </FilterButton>
          <FilterButton label="Filter adjustment layers"><AdjustIcon size={24} /></FilterButton>
          <FilterButton label="Filter type layers"><TypeIcon className="text-[32px]" /></FilterButton>
          <FilterButton label="Filter shape layers"><ShapeIcon size={25} /></FilterButton>
          <FilterButton label="Filter smart objects">
            <Svg size={24}>
              <path d="M11 14V2h11l7 7v20h-9" strokeWidth="2.800" />
              <path d="M21 2v8h8z" fill="currentColor" />
              <path d="M2 17h15v14H2z" fill="currentColor" stroke="none" />
            </Svg>
          </FilterButton>
        </div>
        <button type="button" aria-label="Filter on" className="ml-3 flex h-9 w-[18px] items-start justify-center rounded-full border-2 border-[#666] bg-[#454545]">
          <span className="block h-4 w-4 shrink-0 rounded-full bg-[#dcdcdc]" />
        </button>
      </div>

      {/* Blend mode row */}
      <div className="flex h-14 shrink-0 items-start border-b-2 border-[#3f3f3f] pt-[11px] pl-[7px]">
        <Select label="Blend mode" value="Pass Through" className="mr-2 w-[261px]" />
        <PercentField id="opacity" label="Opacity:" />
      </div>

      {/* Lock row */}
      <div className="flex h-[60px] shrink-0 items-start pt-3 pl-[11px]">
        <div className="flex h-[34px] w-[265px] shrink-0 items-center">
          <span className="w-16">Lock:</span>
          <Svg size={22}>
            <path d="M1 1h30v30H1z" stroke="#9a9a9a" />
            <path d="M0 0h11v11H0zM21 0h11v11H21zM11 11h10v10H11zM0 21h11v11H0zM21 21h11v11H21z" fill="#9a9a9a" stroke="none" />
          </Svg>
          <span className="ml-[22px] text-[#9a9a9a]"><Svg size={26}><BrushShape /></Svg></span>
          <span className="ml-[15px] text-[#9a9a9a]"><MoveIcon size={26} /></span>
          <Svg size={26} className="ml-[19px]">
            <path d="M7 6h14l6 7v13H7z" strokeWidth="2.500" />
            <path d="M20 6v8h8z" fill="currentColor" />
            <path d="M0 5h3M29 5h3M0 27h3M29 27h3M6 0v2M26 0v2M6 30v2M26 30v2" strokeWidth="2.500" />
          </Svg>
          <Svg size={26} className="ml-[18px]">
            <path d="M9 13V8c0-8 14-8 14 0v5" strokeWidth="3" />
            <rect x="4" y="12" width="24" height="18" rx="2" fill="currentColor" stroke="none" />
            <circle cx="16" cy="20" r="2.500" fill="#535353" stroke="none" />
          </Svg>
        </div>
        <PercentField id="fill" label="Fill:" />
      </div>

      <div className="flex min-h-0 flex-1">
        <div className="min-w-0 flex-1 overflow-hidden border-t border-[#4a4a4a]">
          <div className="h-[5px] border-b-2 border-[#474747]">
            <div className="h-[5px] w-[61px] border-r-2 border-[#474747]" />
          </div>
          <ul>
            {layers.map((layer, i) => (
              <LayerRow key={i} layer={layer} onToggle={() => toggle(i)} />
            ))}
          </ul>
        </div>
        <div className="flex w-[29px] shrink-0 flex-col bg-[#4b4b4b] px-[5px] pt-[257px] pb-1.5">
          <div className="w-5 flex-1 rounded-full bg-[#696969]" />
        </div>
      </div>

      <div className="flex h-12 shrink-0 items-center justify-end border-t-2 border-[#3f3f3f] pr-10 pb-1">
        <button type="button" aria-label="Link layers" className="flex w-[54px] justify-center text-[#8a8a8a]">
          <Svg size={28}>
            <path d="M13 9H8a7 7 0 0 0 0 14h5M19 9h5a7 7 0 0 1 0 14h-5M10 16h12" strokeWidth="2.800" />
          </Svg>
        </button>
        <button type="button" aria-label="Layer style" className="relative w-[54px] font-['Open_Sans',sans-serif] text-[27px] leading-8 italic">
          fx
          <svg width="8" height="5" viewBox="0 0 8 5" className="absolute right-2 -bottom-1" aria-hidden="true"><path d="M0 0h8L4 5z" fill="#dcdcdc" /></svg>
        </button>
        <button type="button" aria-label="Add mask" className="flex w-[54px] justify-center">
          <Svg size={26}>
            <path d="M0 4h32v24H0zM16 9.500a6.500 6.500 0 1 0 .1 0z" fill="currentColor" fillRule="evenodd" stroke="none" />
          </Svg>
        </button>
        <button type="button" aria-label="New adjustment layer" className="relative flex w-[54px] justify-center">
          <AdjustIcon size={22} />
          <svg width="8" height="5" viewBox="0 0 8 5" className="absolute right-2 -bottom-2" aria-hidden="true"><path d="M0 0h8L4 5z" fill="#dcdcdc" /></svg>
        </button>
        <button type="button" aria-label="New group" className="flex w-[54px] justify-center">
          <Svg size={24}>
            <path d="M0 7V3h14l3 4zM0 10h30a2 2 0 0 1 2 2v16a2 2 0 0 1-2 2H2a2 2 0 0 1-2-2z" fill="currentColor" stroke="none" />
          </Svg>
        </button>
        <button type="button" aria-label="New layer" className="flex w-[54px] justify-center">
          <Svg size={22}>
            <path d="M1 1h30v30H1zM16 8v16M8 16h16" strokeWidth="3" />
          </Svg>
        </button>
        <button type="button" aria-label="Delete layer" className="flex w-[54px] justify-center">
          <Svg size={26}>
            <path d="M3 6h26M11 5c0-5 10-5 10 0M6 8v22h20V8M12 11v15M16 11v15M20 11v15" strokeWidth="2.600" />
          </Svg>
        </button>
      </div>
    </section>
  );
}

/* Dock */
const Tile = ({ className = "", children }) => (
  <div className={`flex h-[82px] w-20 items-center justify-center overflow-hidden rounded-[18px] shadow-[0_2px_3px_rgba(0,0,0,0.3)] ${className}`}>
    {children}
  </div>
);

const Adobe = ({ text, className }) => (
  <Tile className={`font-['Noto_Sans',sans-serif] text-[48px] leading-none font-semibold ${className}`}>{text}</Tile>
);

const Art = ({ children }) => (
  <svg width="80" height="82" viewBox="0 0 80 82" className="block" aria-hidden="true">{children}</svg>
);

const petals = ["#f7941d", "#e8e000", "#8cc63f", "#39b27a", "#4aa3df", "#7a6bc4", "#b565a7", "#ef3b2d"];
const launchColors = ["#5ad54a", "#fbbc05", "#f7931e", "#e0201b", "#a9adb0", "#ff3b5c", "#a540d6", "#1e9bff", "#34d0b0"];

const dockApps = [
  {
    name: "Finder",
    running: true,
    art: (
      <Tile>
        <Art>
          <defs>
            <linearGradient id="finder" x1="0" x2="0" y1="0" y2="1"><stop offset="0" stopColor="#1fd0fd" /><stop offset="1" stopColor="#1e72f2" /></linearGradient>
          </defs>
          <path d="M0 0h80v82H0z" fill="url(#finder)" />
          <path d="M44 0c-7 16-10 32-10 48h12c-1 12 0 22 3 34h31V0z" fill="#e4e8f2" />
          <path d="M21 24v7M58 24v7" stroke="#1c2a3c" strokeWidth="3.500" strokeLinecap="round" />
          <path d="M16 55c12 13 36 13 48 0" fill="none" stroke="#1c2a3c" strokeWidth="3" strokeLinecap="round" />
        </Art>
      </Tile>
    ),
  },
  {
    name: "Launchpad",
    art: (
      <Tile className="bg-[#dbd5c0]">
        <Art>
          {launchColors.map((c, i) => (
            <rect key={c} x={13 + (i % 3) * 20} y={14 + Math.floor(i / 3) * 20} width="15" height="15" rx="4" fill={c} />
          ))}
        </Art>
      </Tile>
    ),
  },
  {
    name: "Chrome",
    running: true,
    art: (
      <Tile className="bg-[#fbf9f4]">
        <Art>
          <circle cx="40" cy="41" r="35" fill="#fbbc05" />
          <path d="M40 41L9.700 23.500A35 35 0 0 1 70.300 23.500H40z" fill="#e33b2e" />
          <path d="M40 41L24.800 49.800 9.700 23.500A35 35 0 0 0 40 76l15.200-26.300z" fill="#2da94f" />
          <path d="M9.700 23.500L24.800 49.800 40 41 70 23.500z" fill="#e33b2e" />
          <path d="M40 23.500h30.300A35 35 0 0 1 40 76l15.200-26.300z" fill="#fcc31e" />
          <circle cx="40" cy="41" r="17.500" fill="#fff" />
          <circle cx="40" cy="41" r="13.500" fill="#2f7bf0" />
        </Art>
      </Tile>
    ),
  },
  {
    name: "WhatsApp",
    art: (
      <Tile className="bg-linear-to-b from-[#5df777] to-[#0fbd2d] text-white">
        <FaWhatsapp size={68} />
      </Tile>
    ),
  },
  {
    name: "Photos",
    art: (
      <Tile className="bg-white">
        <Art>
          {petals.map((c, i) => (
            <rect key={c} x="30" y="6" width="20" height="34" rx="10" fill={c} fillOpacity=".82" transform={`rotate(${i * 45} 40 41)`} />
          ))}
        </Art>
      </Tile>
    ),
  },
  {
    name: "Calendar",
    art: (
      <Tile className="flex-col bg-white">
        <span className="flex h-[26px] w-full shrink-0 items-center justify-center bg-[#ff453a] text-[17px] font-medium text-white">OCT.</span>
        <span className="flex flex-1 items-center pb-1 text-[48px] leading-none font-light text-[#222]">8</span>
      </Tile>
    ),
  },
  {
    name: "System Settings",
    badge: "2",
    art: (
      <Tile className="bg-linear-to-b from-[#d5dde2] to-[#858585]">
        <Art>
          <circle cx="40" cy="41" r="35" fill="#3a3a3c" />
          <circle cx="40" cy="41" r="30" fill="#2a2a2c" stroke="#b5b5b5" strokeWidth="4" strokeDasharray="1.800 1.500" />
          <circle cx="40" cy="41" r="24" fill="#777" stroke="#222" strokeWidth="3" />
          <circle cx="40" cy="41" r="19" fill="#4a4a4c" />
          <path d="M40 41L27 19M40 41h26M40 41L27 63" stroke="#a5a5a5" strokeWidth="4" />
          <circle cx="40" cy="41" r="4" fill="#ccc" />
        </Art>
      </Tile>
    ),
  },
  {
    name: "Discord",
    art: (
      <Tile className="bg-linear-to-b from-[#7983f5] to-[#5560f0] text-white">
        <FaDiscord size={60} />
      </Tile>
    ),
  },
  {
    name: "QuickTime Player",
    art: (
      <Tile className="bg-linear-to-b from-[#55585e] to-[#0a0a0a]">
        <Art>
          <defs>
            <linearGradient id="qt" x1="0" x2="0" y1="0" y2="1"><stop offset="0" stopColor="#eef3ff" /><stop offset="1" stopColor="#9a9a9c" /></linearGradient>
            <linearGradient id="qtBlue" x1="0" x2="0" y1="0" y2="1"><stop offset="0" stopColor="#2a6ee8" /><stop offset="1" stopColor="#27e0ff" /></linearGradient>
          </defs>
          <circle cx="40" cy="41" r="33" fill="url(#qt)" />
          <circle cx="40" cy="41" r="21" fill="url(#qtBlue)" />
          <path d="M40 36c10 2 22 16 32 30v8H60C52 68 38 50 36 42z" fill="#b4b6ba" />
        </Art>
      </Tile>
    ),
  },
  { name: "Audition", art: <Adobe text="Au" className="bg-[#00005b] text-[#9999ff]" /> },
  { name: "Photoshop", running: true, art: <Adobe text="Ps" className="bg-[#001e36] text-[#31a8ff]" /> },
  { name: "Illustrator", art: <Adobe text="Ai" className="bg-[#330000] text-[#ff9a00]" /> },
  { name: "Character Animator", running: true, art: <Adobe text="Ch" className="bg-[#00005b] text-[#9999ff]" /> },
  { name: "Premiere Pro", art: <Adobe text="Pr" className="bg-[#00005b] text-[#9999ff]" /> },
  {
    name: "Font manager",
    art: (
      <svg width="96" height="96" viewBox="0 0 96 96" className="-mx-2 block shrink-0" aria-hidden="true">
        <circle cx="48" cy="48" r="47" fill="#0c0c0d" />
        <circle cx="48" cy="48" r="43" fill="#2b2c2e" />
        <path d="M37 12c5-2 10-2 14-1-6 9-6 20-1 33l-15-4c-4-10-4-20 2-28z" fill="#0cd852" />
        <path d="M55 13c7 4 13 10 15 18l-16 2c-3-8-2-15 1-20z" fill="#0cd852" />
        <path d="M26 40l43 13c2 4-1 6-5 5L28 48c-4-2-5-7-2-8z" fill="#0cd852" />
        <path d="M29 42l40 12" stroke="#2b2c2e" strokeWidth="1.500" />
        <path d="M45 56l15 3c3 10 0 20-6 28H40c6-9 8-19 5-31z" fill="#0cd852" />
      </svg>
    ),
  },
  {
    name: "Visual Studio Code",
    art: (
      <Tile className="bg-white">
        <Art>
          <path d="M54 12L12 49v5l5 3 37-32z" fill="#0065a9" />
          <path d="M54 70L12 33v-5l5-3 37 32z" fill="#007acc" />
          <path d="M52 12l16 7v44l-16 7z" fill="#1f9cf0" />
        </Art>
      </Tile>
    ),
  },
  {
    name: "Music",
    art: (
      <Tile className="bg-linear-to-b from-[#fb5c74] to-[#fa233b]">
        <Art>
          <path d="M29 60V22l28-8v40" fill="none" stroke="#fff" strokeWidth="4" />
          <path d="M27 20l32-9v9l-32 9z" fill="#fff" />
          <ellipse cx="23" cy="60" rx="8" ry="7" fill="#fff" />
          <ellipse cx="51" cy="54" rx="8" ry="7" fill="#fff" />
        </Art>
      </Tile>
    ),
  },
  {
    name: "Activity Monitor",
    running: true,
    art: (
      <Tile className="border-2 border-[#b7c6c6] bg-black">
        <Art>
          <rect x="9" y="9" width="62" height="64" rx="9" fill="#14201f" />
          <path d="M19 9v64M29 9v64M39 9v64M49 9v64M59 9v64M9 20h62M9 30h62M9 41h62M9 52h62M9 63h62" stroke="#2e4643" />
          <path d="M9 43c4 6 8 6 11 4l3-35 4 46 3-11c4 0 7-2 10-7s6 0 8 5c3 4 5 0 8-2 2 4 6 5 10 4" fill="none" stroke="#5fe0b8" strokeWidth="2" />
        </Art>
      </Tile>
    ),
  },
  {
    name: "Notes",
    art: (
      <Tile className="bg-[#f0eee9]">
        <Art>
          <path d="M0 0h80v21H0z" fill="#ffcf1f" />
          <path d="M0 22h80" stroke="#d8b84a" strokeWidth="1.500" />
          <path d="M2 25h76" stroke="#aaa" strokeWidth="1.500" strokeDasharray="1.500 2.500" />
          <path d="M0 41h80M0 61h80" stroke="#cfcdc8" strokeWidth="1.500" />
        </Art>
      </Tile>
    ),
  },
  null,
  {
    name: "Mail",
    running: true,
    art: (
      <Tile className="bg-linear-to-b from-[#1e6ff5] to-[#1fc4fd]">
        <Art>
          <rect x="12" y="23" width="56" height="37" rx="4" fill="#f2f2f2" />
          <path d="M13 59l20-18M67 59L47 41M13 24l22 23c3 3 7 3 10 0l22-23" fill="none" stroke="#a5a9ad" strokeWidth="1.800" />
        </Art>
      </Tile>
    ),
  },
  {
    name: "Acrobat",
    art: (
      <Tile className="bg-[#b30b00]">
        <Art>
          <path d="M40 18c-6 0-3 12 2 20 6 9 14 15 20 13 6-3-1-9-11-8-13 1-31 9-33 17-1 6 6 5 11-4 6-11 16-38 11-38z" fill="none" stroke="#fff" strokeWidth="4" />
        </Art>
      </Tile>
    ),
  },
  {
    name: "Preview",
    running: true,
    art: (
      <svg width="88" height="92" viewBox="0 0 88 92" className="-mr-2 block shrink-0 translate-y-1" aria-hidden="true">
        <rect x="0" y="0" width="80" height="82" rx="18" fill="#efefef" />
        <rect x="6" y="6" width="68" height="70" rx="12" fill="#8fb4ec" />
        <path d="M6 44h68v18H6z" fill="#1c3a6e" />
        <path d="M6 58c16-6 26 6 40 4v14H18a12 12 0 0 1-12-12z" fill="#a99a80" />
        <path d="M8 56l8-4 7 6 9-2 8 5-10 3-12-4z" fill="#e8eef5" />
        <path d="M42 56h34l6 28c0 4-46 4-46 0z" fill="#c7cbd2" stroke="#7d8087" strokeWidth="1.500" />
        <path d="M47 62h24l4 18H43z" fill="#eef0f3" />
        <path d="M50 64l6 2-2 6zM62 63l5 5-7 4z" fill="#7a8790" />
        <rect x="41" y="40" width="36" height="17" rx="4" fill="#1a1a1b" />
        <ellipse cx="59" cy="42" rx="17" ry="3.500" fill="#3b3b3d" />
      </svg>
    ),
  },
  null,
  {
    name: "Documents",
    art: (
      <svg width="86" height="96" viewBox="0 0 86 96" className="-mx-1 block shrink-0" aria-hidden="true">
        <path d="M10 1h66v16H10z" fill="#f4f1ea" />
        <path d="M1 11h84v84H1z" fill="#fbfbf8" />
        <path d="M5 15h76v76H5z" fill="#d9d2bd" stroke="#8d8d80" />
        <path d="M13 51l35 17v21L16 74zM48 68l30-19v22L48 89z" fill="#c3bda4" stroke="#49595a" strokeWidth="1.500" />
        <path d="M13 51l30-17 35 15-30 19z" fill="#8c9082" stroke="#49595a" strokeWidth="1.500" />
        <path d="M20 50l24-12v17l-8 6z" fill="#d5cfb8" />
        <path d="M12 43l48-22 10 2v11L18 50z" fill="#b9b49c" stroke="#3f4f50" strokeWidth="1.500" />
        <path d="M12 43h25v6l-17 4z" fill="#5d6b69" />
        <path d="M15 59l33 16M16 67l32 15M48 75l30-18M48 82l30-18M52 34v14" stroke="#5e6a66" strokeWidth="1.500" />
      </svg>
    ),
  },
  {
    name: "Trash",
    art: (
      <svg width="80" height="96" viewBox="0 0 80 96" className="block shrink-0" aria-hidden="true">
        <defs>
          <linearGradient id="trash" x1="0" x2="1" y1="0" y2="0"><stop offset="0" stopColor="#66686b" /><stop offset=".4" stopColor="#808285" /><stop offset="1" stopColor="#55575a" /></linearGradient>
        </defs>
        <ellipse cx="40" cy="13" rx="35" ry="9" fill="#505254" />
        <path d="M10 14L20 4l10-2 8 3 10-5 8 5 10 3 5 7-14 6H22z" fill="#e9e9ec" stroke="#888" />
        <path d="M22 17l10-8 6 10zM48 6l10 9-12 3z" fill="#6b4a3c" />
        <path d="M32 10l8 2-4 5z" fill="#35c8c0" />
        <path d="M52 9l6 6-7 3z" fill="#3d5fb8" />
        <path d="M5 13c10 9 60 9 70 0l-8 76c-3 8-51 8-54 0z" fill="url(#trash)" />
        <path d="M13 84c8 8 46 8 54 0l-1 5c-3 8-49 8-52 0z" fill="#a2a7ad" fillOpacity=".6" />
      </svg>
    ),
  },
];

function Dock() {
  return (
    <footer className="flex h-[142px] shrink-0 justify-center bg-[radial-gradient(ellipse_70px_110px_at_99.500%_0%,#e8c860_0%,transparent_70%),radial-gradient(ellipse_130px_70px_at_97%_100%,#fbe9a8_0%,#f9c850_55%,transparent_100%),linear-gradient(to_bottom,rgba(70,50,10,0.7)_0%,transparent_45%)] pt-0.5">
      <nav
        aria-label="Dock"
        className="flex h-[130px] items-start gap-7 rounded-[34px] border-2 border-[#b08d4e] bg-[linear-gradient(90deg,#8b7a20_0%,#8d7424_14%,#93703c_22%,#985a10_29%,#a0701c_33%,#987f2e_38%,#9c6b38_50%,#95762a_60%,#9c640e_68%,#947020_76%,#966818_85%,#94601a_92%,#97794c_100%)] px-[18px] shadow-[0_0_2px_rgba(0,0,0,0.7)]"
      >
        {dockApps.map((app, i) =>
          app === null ? (
            <div key={i} className="flex h-[126px] w-5 justify-center pt-4">
              <div className="h-[94px] w-0.5 bg-[#dba55f]" />
            </div>
          ) : (
            <button key={i} type="button" aria-label={app.name} className="relative flex h-[126px] w-20 flex-col items-center">
              <span className="flex h-[116px] items-center justify-center">{app.art}</span>
              {app.running && <span className="h-2 w-2 shrink-0 rounded-full bg-[#fff2b0]" />}
              {app.badge && (
                <span className="absolute top-2 -right-3 flex h-[38px] w-[38px] items-center justify-center rounded-full bg-[#f23b30] text-[24px] text-white">
                  {app.badge}
                </span>
              )}
            </button>
          )
        )}
      </nav>
    </footer>
  );
}

export default function App() {
  return (
    <div className="flex h-screen w-full flex-col overflow-hidden bg-[linear-gradient(86deg,#ef8d35_0%,#a8652c_1.200%,#d8b79a_2.200%,#b98436_3.200%,#d2b454_4.500%,#dcc35e_8%,#c28c42_16%,#cb9a60_24%,#e4a95a_31%,#e8d06a_36%,#e8b888_40%,#ee9f5c_48%,#f0b45c_54%,#f6a552_62%,#f5c8a8_70%,#ffb25c_80%,#fbe3b8_88%,#e08a2c_92%,#f0a035_96%,#f8a03a_100%)] font-['Inter','Liberation_Sans',sans-serif] leading-normal">
      <MenuBar />
      <main className="relative mt-0.5 flex min-h-0 flex-1 flex-col rounded-t-2xl border-2 border-[#383838] bg-[#535353] shadow-[0_0_0_2px_#000]">
        <div className="relative flex h-11 shrink-0 items-center justify-center border-b-2 border-[#383838] pt-0.5">
          <div className="absolute top-2 left-3.5 flex gap-4">
            <button type="button" aria-label="Close" className="h-6 w-6 rounded-full bg-[#ff5f57]" />
            <button type="button" aria-label="Minimize" className="h-6 w-6 rounded-full bg-[#febc2e]" />
            <button type="button" aria-label="Zoom window" className="h-6 w-6 rounded-full bg-[#28c840]" />
          </div>
          <h1 className="text-[26px] leading-8 text-[#e2e2e2]">Adobe Photoshop 2024</h1>
        </div>
        <OptionsBar />
        <div className="flex min-h-0 flex-1 gap-0.5">
          <Document />
          <IconColumn groups={dockOne} />
          <IconColumn groups={dockTwo} />
          <LayersPanel />
        </div>
        <ToolPalette />
      </main>
      <Dock />
    </div>
  );
}
